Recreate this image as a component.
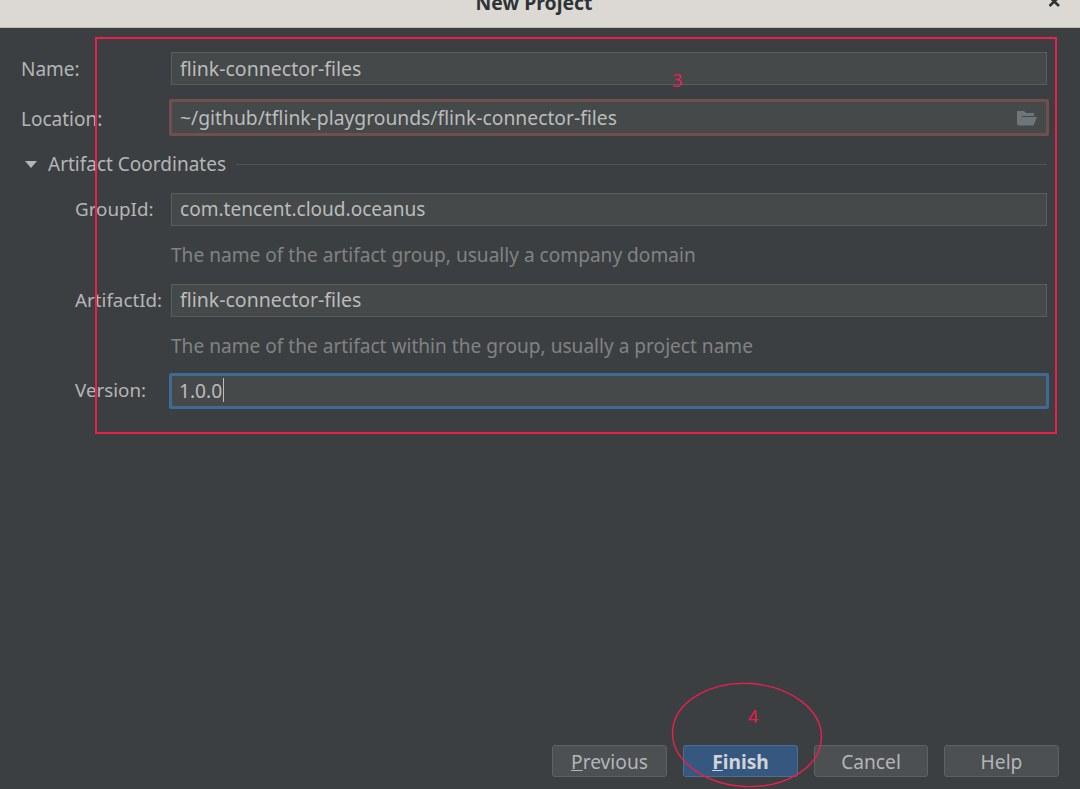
<div class="window">
  <header class="titlebar">
    <span class="title">New Project</span>
    <svg class="close" width="13" height="12" viewBox="0 0 13 12"><path d="M1.5 0 L11 9 M11 0 L1.5 9" stroke="#2e3436" stroke-width="2.6" fill="none"/></svg>
  </header>

  <main class="form">
    <div class="row name">
      <span class="label">Name:</span>
      <div class="field">flink-connector-files</div>
    </div>
    <div class="row location">
      <span class="label">Location:</span>
      <div class="field error">
        <span>~/github/tflink-playgrounds/flink-connector-files</span>
        <svg width="20" height="16" viewBox="0 0 20 16"><path d="M0 1 H7 L9 3 H17 V6 H5 L2 14 L0 15 Z" fill="#6e7679"/><path d="M4.5 7 H20 L16.5 15.5 H1 Z" fill="#6e7679"/></svg>
      </div>
    </div>

    <div class="section">
      <span class="triangle"></span>
      <span class="section-title">Artifact Coordinates</span>
      <span class="rule"></span>
    </div>

    <div class="row sub group">
      <span class="label">GroupId:</span>
      <div class="field">com.tencent.cloud.oceanus</div>
    </div>
    <div class="hint">The name of the artifact group, usually a company domain</div>
    <div class="row sub artifact">
      <span class="label">ArtifactId:</span>
      <div class="field">flink-connector-files</div>
    </div>
    <div class="hint">The name of the artifact within the group, usually a project name</div>
    <div class="row sub version">
      <span class="label">Version:</span>
      <div class="field focus">1.0.0<span class="caret"></span></div>
    </div>
  </main>

  <footer class="buttons">
    <button><u>P</u>revious</button>
    <button class="primary"><u>F</u>inish</button>
    <button class="cancel">Cancel</button>
    <button>Help</button>
  </footer>

  <div class="box-annot"></div>
  <span class="num n3">3</span>
  <svg class="ellipse" width="154" height="108" viewBox="0 0 154 108"><ellipse cx="77" cy="53" rx="74.5" ry="51.5" transform="rotate(3 77 53)" fill="none" stroke="#e8204a" stroke-width="1.4"/></svg>
  <span class="num n4">4</span>
</div>

<style>
  :global(body) { margin: 0; background: #3c3f41; }
  .window {
    position: relative;
    width: 1080px;
    height: 789px;
    overflow: hidden;
    background: #3c3f41;
    color: #b3b6b7;
    font-family: "Noto Sans", "Open Sans", sans-serif;
    font-size: 19.2px;
    display: flex;
    flex-direction: column;
  }
  .titlebar {
    position: relative;
    height: 28px;
    flex: none;
    box-sizing: border-box;
    background: #dcd9d5;
    border-bottom: 1px solid #bdb9b2;
    display: flex;
    align-items: flex-end;
    justify-content: center;
    padding: 0 12px 13px 0;
    overflow: hidden;
  }
  .title { color: #2e3436; font-weight: 700; font-size: 19.4px; line-height: 22px; }
  .close { position: absolute; right: 19px; top: -3px; }

  .form {
    flex: 1;
    padding: 24px 33px 0 21px;
    display: flex;
    flex-direction: column;
  }
  .row { display: flex; align-items: center; }
  .label { width: 150px; flex: none; position: relative; font-size: 19px; }
  .sub .label { width: 96px; margin-left: 54px; top: -1px; font-size: 18.8px; }
  .location .label { top: 1px; }
  .field {
    flex: 1;
    box-sizing: border-box;
    height: 33px;
    display: flex;
    align-items: center;
    padding: 0 8px 2px;
    background: #45494a;
    border: 1px solid #5a5d5f;
    color: #bbbcbc;
  }
  .name .field, .artifact .field { font-size: 19.5px; }
  .name .field { padding-bottom: 1px; }
  .group .field { font-size: 19.05px; }
  .location { margin-top: 14px; }
  .error {
    height: 37px;
    margin: 0 -2px;
    padding: 0 9px 0 8px;
    font-size: 19.3px;
    justify-content: space-between;
    border: 3px solid #714f4f;
    border-radius: 2px;
  }
  .section { display: flex; align-items: center; margin-top: 15px; height: 26px; }
  .triangle {
    width: 0; height: 0; margin-left: 4px;
    border-left: 6px solid transparent;
    border-right: 6px solid transparent;
    border-top: 7px solid #b3b6b7;
  }
  .section-title { margin-left: 11px; font-size: 19px; }
  .rule { flex: 1; height: 1px; background: #515456; margin-left: 10px; }
  .group { margin-top: 16px; }
  .hint {
    margin-left: 150px;
    height: 58px;
    display: flex;
    align-items: center;
    color: #808385;
    font-size: 19.1px;
    box-sizing: border-box;
  }
  .version { margin-top: -2px; }
  .focus {
    height: 36px;
    margin: 0 -2px;
    border: 3px solid #3f6a94;
    border-radius: 2px;
    padding: 0 7px 2px;
  }
  .caret { width: 1px; height: 24px; background: #bbbcbc; margin-left: 1px; }

  .buttons {
    display: flex;
    justify-content: flex-end;
    gap: 16px;
    padding: 0 21px 12px 0;
  }
  button {
    width: 115px;
    height: 32px;
    box-sizing: border-box;
    padding: 0;
    font: inherit;
    color: #b3b6b7;
    background: #4c5052;
    border: 1px solid #5e6163;
    border-radius: 3px;
  }
  .cancel { width: 114px; }
  .primary { background: #365880; border-color: #4c708c; color: #d0d4d8; font-weight: 700; }

  .box-annot {
    position: absolute; left: 95px; top: 37px; width: 958px; height: 393px;
    border: 2px solid #e8204a;
  }
  .ellipse { position: absolute; left: 670px; top: 682px; }
  .num { position: absolute; color: #e8204a; font-size: 18px; line-height: 18px; }
  .n3 { left: 672px; top: 71px; }
  .n4 { left: 748px; top: 707px; }
</style>
